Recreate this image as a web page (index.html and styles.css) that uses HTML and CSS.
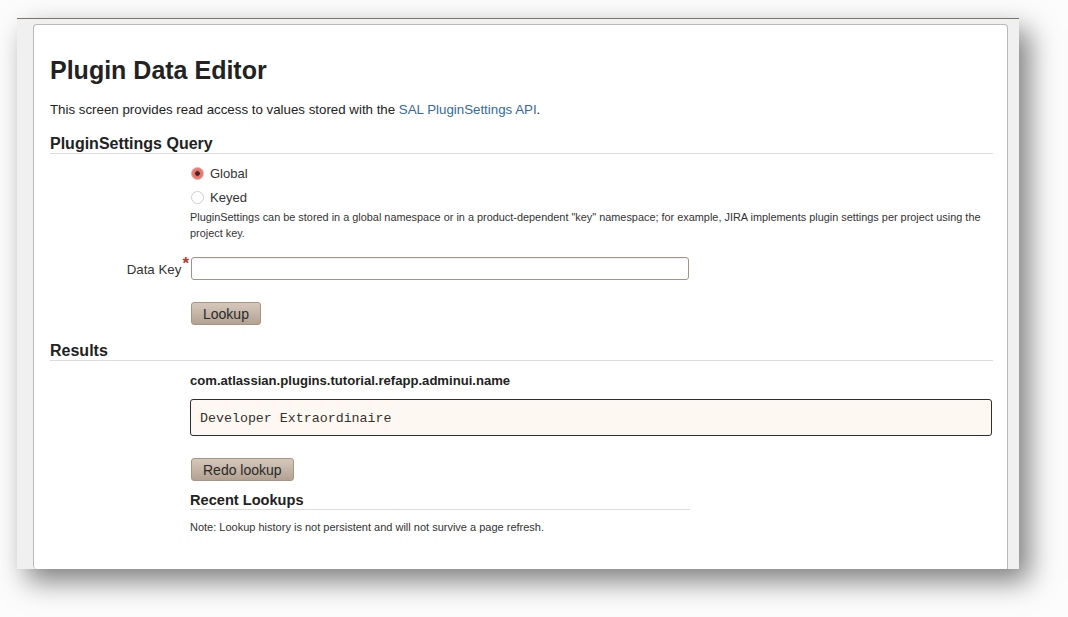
FILE: index.html
```html
<!DOCTYPE html>
<html>
<head>
<meta charset="utf-8">
<title>Plugin Data Editor</title>
<link rel="stylesheet" href="styles.css">
</head>
<body>
<div class="frame">
  <div class="panel">
    <h1 class="title">Plugin Data Editor</h1>
    <p class="intro">This screen provides read access to values stored with the <a href="#" class="link">SAL PluginSettings API</a>.</p>

    <h2 class="section">PluginSettings Query</h2>
    <div class="field-col radios">
      <label class="radio-row"><input type="radio" name="ns" class="radio" checked> <span>Global</span></label>
      <label class="radio-row"><input type="radio" name="ns" class="radio"> <span>Keyed</span></label>
      <p class="desc">PluginSettings can be stored in a global namespace or in a product-dependent "key" namespace; for example, JIRA implements plugin settings per project using the project key.</p>
    </div>

    <div class="form-row">
      <label class="form-label">Data Key<span class="req">*</span></label>
      <input type="text" class="text-input">
    </div>

    <div class="field-col btn-row">
      <button class="btn">Lookup</button>
    </div>

    <h2 class="section results-head">Results</h2>
    <div class="field-col">
      <div class="key-name">com.atlassian.plugins.tutorial.refapp.adminui.name</div>
      <div class="value-box">Developer Extraordinaire</div>
      <div class="btn-row">
        <button class="btn">Redo lookup</button>
      </div>
      <h3 class="subsection">Recent Lookups</h3>
      <p class="note">Note: Lookup history is not persistent and will not survive a page refresh.</p>
    </div>
  </div>
</div>
</body>
</html>
```

FILE: styles.css
```css
* { box-sizing: border-box; }

html {
  height: 100%;
  background: #fcfcfc;
}

body {
  margin: 0;
  min-height: 100%;
  padding: 18px 0 0 17px;
  font-family: "Liberation Sans", Arial, sans-serif;
  color: #333;
  background: #fcfcfc;
}

.frame {
  width: 1002px;
  height: 551px;
  background: #f0f0f0;
  border-top: 1px solid #7e736b;
  padding: 5px 11px 0 16px;
  display: flex;
  flex-direction: column;
  box-shadow: 10px 12px 26px rgba(0, 0, 0, 0.5);
}

.panel {
  flex: 1;
  background: #fff;
  border: 1px solid #b9b9b9;
  border-bottom: none;
  border-radius: 4px 4px 0 4px;
  padding: 31px 14px 0 16px;
}

.title {
  margin: 0;
  font-size: 25px;
  line-height: 29px;
  font-weight: bold;
  color: #222;
}

.intro {
  margin: 17px 0 0;
  font-size: 13.3px;
  line-height: 16px;
  color: #222;
}

.link {
  color: #336aa3;
  text-decoration: none;
}

.section {
  margin: 15px 0 0;
  padding-top: 1px;
  font-size: 16px;
  line-height: 19px;
  font-weight: bold;
  color: #222;
  border-bottom: 1px solid #dcdcdc;
}

.results-head {
  margin-top: 15px;
}

.field-col {
  margin-left: 140px;
}

.radios {
  margin-top: 7px;
}

.radio-row {
  display: flex;
  align-items: center;
  height: 24px;
  font-size: 13px;
  color: #333;
}

.radio {
  appearance: none;
  -webkit-appearance: none;
  width: 13px;
  height: 13px;
  margin: 0 6px 0 1px;
  border-radius: 50%;
  border: 1px solid #cfcfcf;
  background: #fff;
}

.radio:checked {
  border-color: #e4a9a4;
  background: radial-gradient(circle, #3a2a2a 0 2px, #e96d64 2.6px, #f08a82 100%);
}

.desc {
  margin: 0;
  font-size: 10.9px;
  line-height: 16px;
  color: #333;
}

.form-row {
  display: flex;
  align-items: center;
  margin-top: 16px;
}

.form-label {
  width: 141px;
  padding-right: 2px;
  text-align: right;
  font-size: 13.3px;
  color: #333;
}

.req {
  color: #b03a32;
  font-size: 17px;
  font-weight: bold;
  position: relative;
  top: -5px;
  margin-left: 1px;
}

.text-input {
  width: 498px;
  height: 23px;
  border: 1px solid #a39385;
  border-radius: 3px;
  background: #fff;
  box-shadow: inset 0 1px 1px rgba(0, 0, 0, 0.06);
  font-size: 13px;
}

.btn-row {
  margin-top: 22px;
}

.btn {
  height: 23px;
  margin-left: 1px;
  padding: 0 11px;
  font-family: "Liberation Sans", Arial, sans-serif;
  font-size: 14px;
  color: #2a2a2a;
  border: 1px solid #a69484;
  border-radius: 3px;
  background: linear-gradient(#d5c8bb, #b3a292);
  cursor: pointer;
}

.key-name {
  margin-top: 12px;
  font-size: 13.1px;
  line-height: 16px;
  font-weight: bold;
  color: #222;
}

.value-box {
  margin-top: 10px;
  width: 802px;
  padding: 11px 9px 9px 9px;
  font-family: "Liberation Mono", "DejaVu Sans Mono", monospace;
  font-size: 13.3px;
  line-height: 15px;
  color: #333;
  background: #fdf9f2;
  border: 1px solid #2e2e2e;
  border-radius: 3px;
}

.subsection {
  margin: 10px 0 0;
  padding-top: 1px;
  width: 500px;
  font-size: 14.6px;
  line-height: 17px;
  font-weight: bold;
  color: #222;
  border-bottom: 1px solid #dcdcdc;
}

.note {
  margin: 9px 0 0;
  font-size: 11px;
  line-height: 16px;
  color: #333;
}
```
